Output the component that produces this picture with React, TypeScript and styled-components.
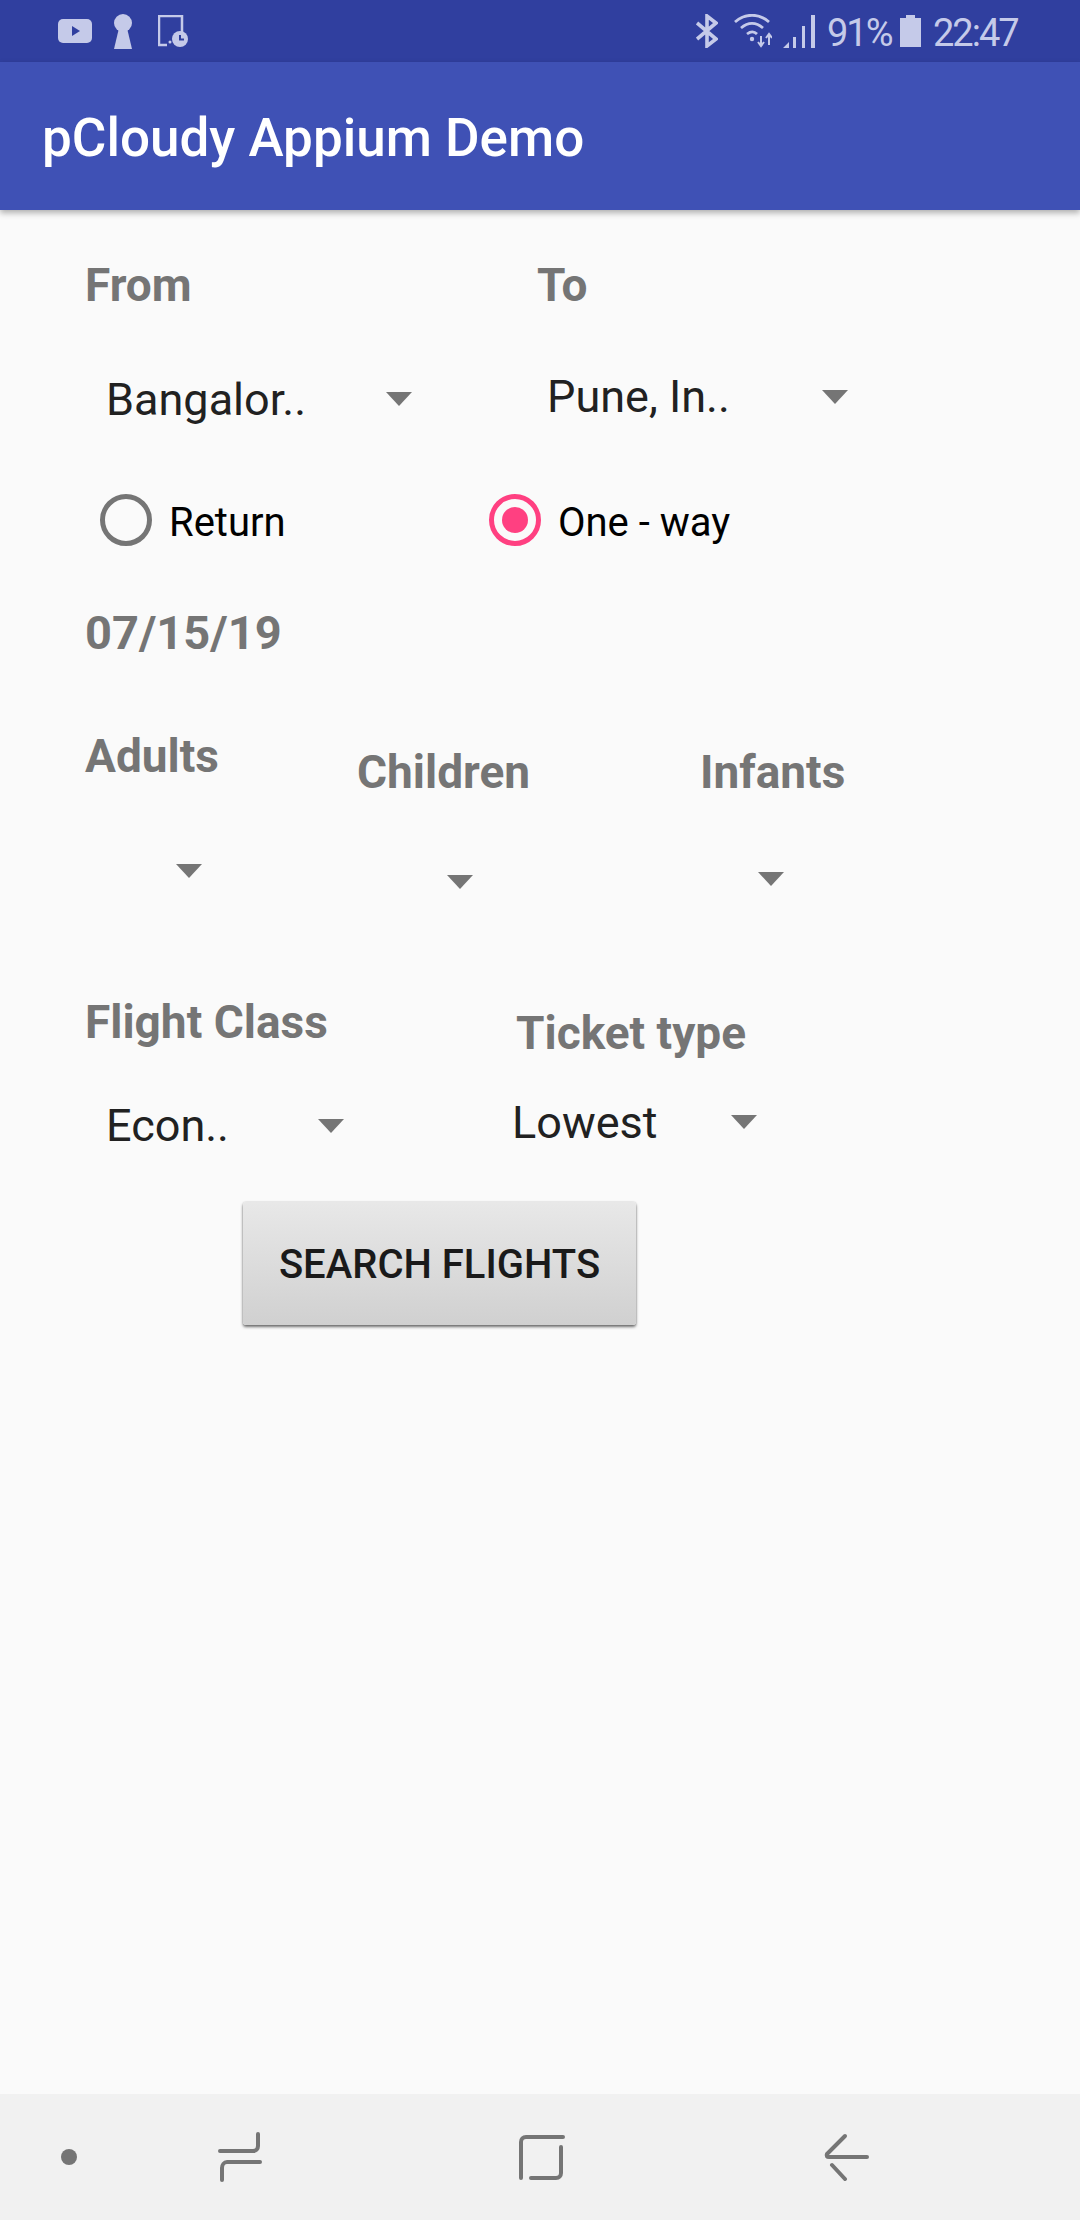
import styled, { createGlobalStyle } from "styled-components";

const GlobalStyle = createGlobalStyle`
  html, body {
    margin: 0;
    padding: 0;
    background: #fafafa;
    font-family: Roboto, "Liberation Sans", sans-serif;
  }
`;

const Screen = styled.div`
  width: 1080px;
  height: 2220px;
  display: flex;
  flex-direction: column;
  overflow: hidden;
`;

const StatusBar = styled.div`
  height: 62px;
  flex: none;
  background: #303f9f;
  color: #c5cae9;
  display: flex;
  align-items: center;
  padding: 0 63px 0 58px;
  box-sizing: border-box;
`;
const StatusLeft = styled.div`
  display: flex;
  align-items: center;
  gap: 21px;
  flex: 1;
`;
const StatusRight = styled.div`
  display: flex;
  align-items: center;
`;
const StatusText = styled.span<{ $left: number; $width: number }>`
  margin-left: ${(props) => props.$left}px;
  width: ${(props) => props.$width}px;
  padding-top: 4px;
  font-size: 38px;
  line-height: 62px;
  letter-spacing: -2px;
  white-space: nowrap;
`;
const StatusIcon = styled.svg<{ $left?: number }>`
  display: block;
  flex: none;
  margin-left: ${(props) => props.$left ?? 0}px;
`;

const AppBar = styled.div`
  height: 148px;
  flex: none;
  background: #3f51b5;
  color: #ffffff;
  box-shadow: 0 3px 6px rgba(0, 0, 0, 0.3);
  padding-left: 42px;
  font-size: 53px;
  font-weight: 500;
  line-height: 152px;
  box-sizing: border-box;
  position: relative;
`;

const Form = styled.div`
  flex: 1;
  background: #fafafa;
  padding-top: 50px;
  box-sizing: border-box;
`;
const Row = styled.div<{ $top?: number }>`
  display: flex;
  align-items: flex-start;
  margin-top: ${(props) => props.$top ?? 0}px;
`;
const Column = styled.div<{ $left: number; $top?: number; $width?: number }>`
  margin-left: ${(props) => props.$left}px;
  margin-top: ${(props) => props.$top ?? 0}px;
  width: ${(props) => (props.$width ? `${props.$width}px` : "auto")};
  flex: none;
`;
const Label = styled.div`
  font-size: 46px;
  font-weight: 700;
  line-height: 50px;
  margin-bottom: 2px;
  color: #757575;
  white-space: nowrap;
`;
const DateLabel = styled(Label)`
  font-size: 47px;
`;
const Select = styled.div<{ $valueWidth: number }>`
  display: grid;
  grid-template-columns: ${(props) => props.$valueWidth}px 26px;
`;
const SelectValue = styled.div`
  font-size: 45px;
  line-height: 52px;
  color: #212121;
  white-space: nowrap;
`;
const Arrow = styled.div<{ $top: number; $left?: number }>`
  width: 0;
  height: 0;
  border-left: 13px solid transparent;
  border-right: 13px solid transparent;
  border-top: 14px solid #757575;
  margin-top: ${(props) => props.$top}px;
  margin-left: ${(props) => props.$left ?? 0}px;
`;
const Radio = styled.div<{ $checked?: boolean }>`
  width: 52px;
  height: 52px;
  flex: none;
  box-sizing: border-box;
  border-radius: 50%;
  border: 5px solid ${(props) => (props.$checked ? "#ff4081" : "#757575")};
  display: flex;
  align-items: center;
  justify-content: center;
  &::after {
    content: "";
    display: ${(props) => (props.$checked ? "block" : "none")};
    width: 26px;
    height: 26px;
    border-radius: 50%;
    background: #ff4081;
  }
`;
const RadioOption = styled.div<{ $width: number; $left: number }>`
  display: flex;
  gap: 17px;
  height: 56px;
  width: ${(props) => props.$width}px;
  margin-left: ${(props) => props.$left}px;
  flex: none;
`;
const RadioText = styled.div`
  font-size: 40px;
  line-height: 58px;
  color: #000000;
  white-space: nowrap;
`;
const SearchButton = styled.button`
  display: block;
  width: 393px;
  height: 123px;
  margin: 50px 0 0 243px;
  padding: 2px 0 0;
  border: none;
  border-radius: 3px;
  background: linear-gradient(#e8e8e8, #d0d0d0);
  box-shadow: 0 2px 3px rgba(0, 0, 0, 0.55), 0 0 2px rgba(0, 0, 0, 0.2);
  font-family: inherit;
  font-size: 40px;
  font-weight: 500;
  color: #1a1a1a;
  white-space: nowrap;
`;

const NavBar = styled.div`
  height: 126px;
  flex: none;
  background: #f1f1f1;
  display: grid;
  grid-template-columns: 138px 204px 400px 208px;
  justify-items: center;
  align-items: center;
`;
const NavDot = styled.div`
  width: 16px;
  height: 16px;
  border-radius: 50%;
  background: #757575;
`;
const NavIcon = styled.svg`
  display: block;
  fill: none;
  stroke: #757575;
  stroke-width: 4;
  stroke-linecap: round;
`;

export default function App() {
  return (
    <>
      <GlobalStyle />
      <Screen>
        <StatusBar>
          <StatusLeft>
            <StatusIcon width="34" height="24" viewBox="0 0 34 24">
              <rect x="0" y="0" width="34" height="24" rx="5" fill="#c5cae9" />
              <path d="M14 7l8 5-8 5z" fill="#303f9f" />
            </StatusIcon>
            <StatusIcon width="20" height="35" viewBox="0 0 20 35" fill="#c5cae9">
              <circle cx="10" cy="9" r="9" />
              <path d="M6 14h8l5 21H1z" />
            </StatusIcon>
            <StatusIcon width="32" height="32" viewBox="0 0 32 32" $left={4}>
              <path d="M9 30H1V1h23v16" fill="none" stroke="#c5cae9" strokeWidth="2.5" />
              <circle cx="12" cy="27" r="1.5" fill="#c5cae9" />
              <circle cx="22" cy="24" r="8" fill="#c5cae9" />
              <path d="M22 20v4.5h4" fill="none" stroke="#303f9f" strokeWidth="2" />
            </StatusIcon>
          </StatusLeft>
          <StatusRight>
            <StatusIcon width="22" height="34" viewBox="0 0 22 34">
              <path d="M1 9l19 16-9 7V2l9 7L1 25" fill="none" stroke="#c5cae9" strokeWidth="3.6" />
            </StatusIcon>
            <StatusIcon width="38" height="34" viewBox="0 0 38 34" $left={16}>
              <path d="M1 8c10-9 24-9 34 0M7 14c7-6 15-6 22 0M13 20c4-3 7-3 10 0" fill="none" stroke="#c5cae9" strokeWidth="2.8" />
              <circle cx="18" cy="25" r="2.2" fill="#c5cae9" />
              <path d="M27 22v9M24 28l3 4 3-4M35 21v10M32 24l3-4 3 4" fill="none" stroke="#c5cae9" strokeWidth="2" />
            </StatusIcon>
            <StatusIcon width="32" height="33" viewBox="0 0 32 33" $left={11} fill="#c5cae9">
              <path d="M0 33l6-6v6zM10 22h3v11h-3zM19 11h3v22h-3zM28 0h4v33h-4z" />
            </StatusIcon>
            <StatusText $left={12} $width={73}>91%</StatusText>
            <StatusIcon width="21" height="32" viewBox="0 0 21 32" fill="#c5cae9">
              <path d="M6 0h9v3h6v29H0V3h6z" />
            </StatusIcon>
            <StatusText $left={12} $width={84}>22:47</StatusText>
          </StatusRight>
        </StatusBar>
        <AppBar>pCloudy Appium Demo</AppBar>
        <Form>
          <Row>
            <Column $left={85} $width={452}>
              <Label>From</Label>
            </Column>
            <Column $left={0}>
              <Label>To</Label>
            </Column>
          </Row>
          <Row $top={59}>
            <Column $left={106} $top={3} $width={441}>
              <Select $valueWidth={280}>
                <SelectValue>Bangalor..</SelectValue>
                <Arrow $top={18} />
              </Select>
            </Column>
            <Column $left={0}>
              <Select $valueWidth={275}>
                <SelectValue>Pune, In..</SelectValue>
                <Arrow $top={19} />
              </Select>
            </Column>
          </Row>
          <Row $top={68}>
            <RadioOption $left={100} $width={389}>
              <Radio />
              <RadioText>Return</RadioText>
            </RadioOption>
            <RadioOption $left={0} $width={300}>
              <Radio $checked />
              <RadioText>One - way</RadioText>
            </RadioOption>
          </Row>
          <Row $top={58}>
            <Column $left={85}>
              <DateLabel>07/15/19</DateLabel>
            </Column>
          </Row>
          <Row $top={71}>
            <Column $left={85} $width={272}>
              <Label>Adults</Label>
              <Arrow $top={83} $left={91} />
            </Column>
            <Column $left={0} $top={16} $width={343}>
              <Label>Children</Label>
              <Arrow $top={78} $left={90} />
            </Column>
            <Column $left={0} $top={16}>
              <Label>Infants</Label>
              <Arrow $top={75} $left={58} />
            </Column>
          </Row>
          <Row $top={108}>
            <Column $left={85} $width={431}>
              <Label>Flight Class</Label>
            </Column>
            <Column $left={0} $top={11}>
              <Label>Ticket type</Label>
            </Column>
          </Row>
          <Row $top={37}>
            <Column $left={106} $top={3} $width={406}>
              <Select $valueWidth={212}>
                <SelectValue>Econ..</SelectValue>
                <Arrow $top={19} />
              </Select>
            </Column>
            <Column $left={0}>
              <Select $valueWidth={219}>
                <SelectValue>Lowest</SelectValue>
                <Arrow $top={18} />
              </Select>
            </Column>
          </Row>
          <SearchButton>SEARCH FLIGHTS</SearchButton>
        </Form>
        <NavBar>
          <NavDot />
          <NavIcon width="44" height="50" viewBox="0 0 44 50">
            <path d="M2 19h33c3 0 5-2 5-5V2" />
            <path d="M4 48V36c0-3 2-6 5-6h33" />
          </NavIcon>
          <NavIcon width="46" height="46" viewBox="0 0 46 46">
            <path d="M2 44V8c0-3 2-5 5-5h37" />
            <path d="M42 13v26c0 3-2 5-5 5H12" />
          </NavIcon>
          <NavIcon width="46" height="48" viewBox="0 0 46 48">
            <path d="M22 3L4 21c-1 2 0 3 2 3h38" />
            <path d="M9 32l13 14" />
          </NavIcon>
        </NavBar>
      </Screen>
    </>
  );
}
